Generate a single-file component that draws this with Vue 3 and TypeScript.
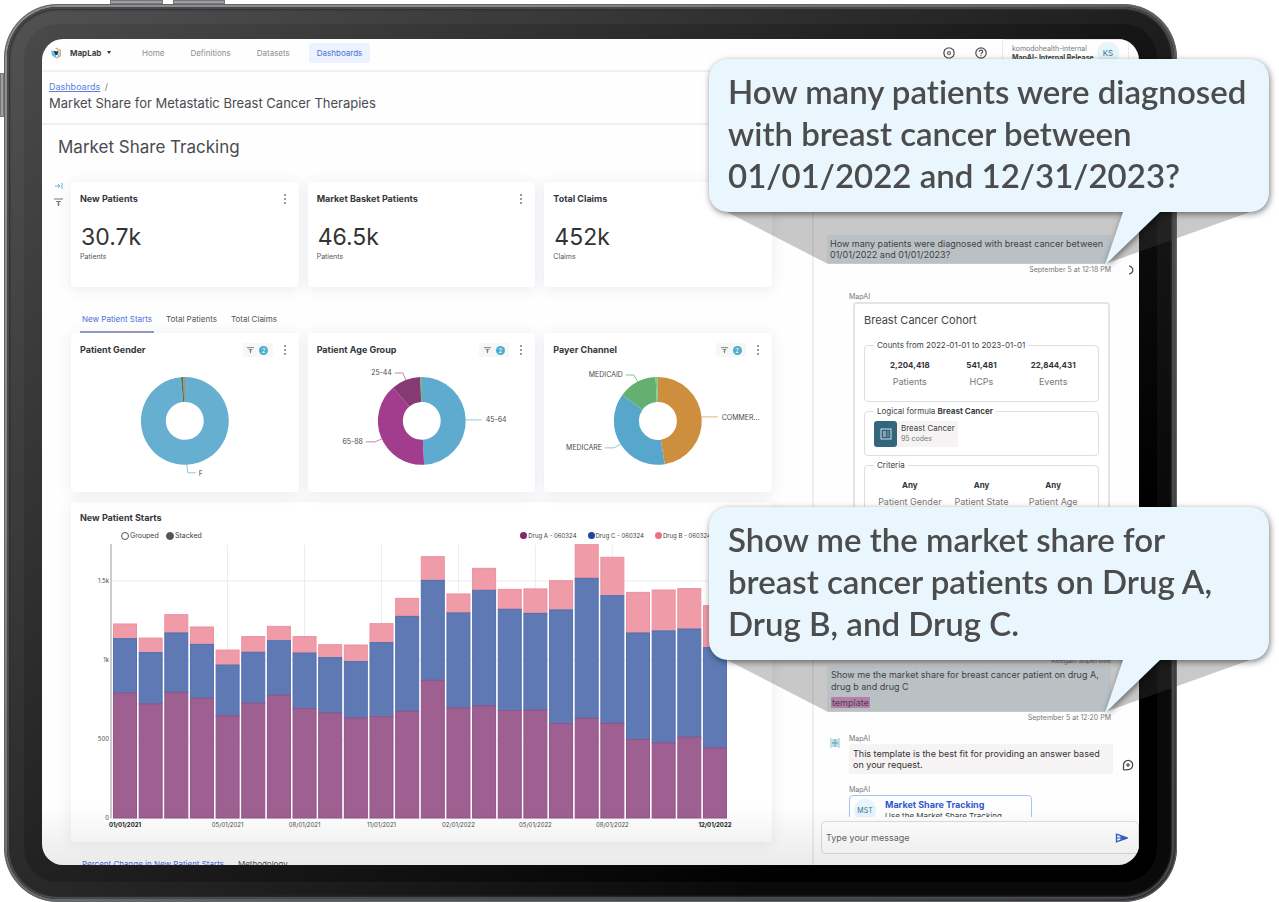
<script setup lang="ts">
import { ref } from 'vue'

interface Slice { color: string; from: number; to: number }
interface DonutLabel { text: string; x: number; y: number; anchor: 'start' | 'end'; line: string; color: string }
interface Donut { title: string; slices: Slice[]; labels: DonutLabel[] }

const navItems = ['Home', 'Definitions', 'Datasets', 'Dashboards']
const metrics = [
  { title: 'New Patients', value: '30.7k', unit: 'Patients' },
  { title: 'Market Basket Patients', value: '46.5k', unit: 'Patients' },
  { title: 'Total Claims', value: '452k', unit: 'Claims' },
]
const tabs = ['New Patient Starts', 'Total Patients', 'Total Claims']

const donuts: Donut[] = [
  {
    title: 'Patient Gender',
    slices: [
      { color: '#67afd0', from: 0, to: 355 },
      { color: '#3f7d4c', from: 355, to: 358 },
      { color: '#a8746c', from: 358, to: 360 },
    ],
    labels: [{ text: 'F', x: 128, y: 120, anchor: 'start', line: '116,109 117,117 125,117', color: '#8cc7e4' }],
  },
  {
    title: 'Patient Age Group',
    slices: [
      { color: '#5fabcf', from: 0, to: 177 },
      { color: '#a23c8c', from: 177, to: 319 },
      { color: '#863a74', from: 319, to: 358 },
      { color: '#63b070', from: 358, to: 360 },
    ],
    labels: [
      { text: '25-44', x: 84, y: 19, anchor: 'end', line: '87,17 95,17 98,24', color: '#c583b6' },
      { text: '65-88', x: 55, y: 88, anchor: 'end', line: '58,86 67,86 74,83', color: '#c583b6' },
      { text: '45-64', x: 178, y: 66, anchor: 'start', line: '158,64 174,64', color: '#8cc7e4' },
    ],
  },
  {
    title: 'Payer Channel',
    slices: [
      { color: '#cd8f3e', from: 0, to: 171 },
      { color: '#57a6cb', from: 171, to: 306 },
      { color: '#63b070', from: 306, to: 357 },
      { color: '#7cc489', from: 357, to: 360 },
    ],
    labels: [
      { text: 'MEDICAID', x: 79, y: 21, anchor: 'end', line: '82,19 90,19 94,26', color: '#7cc489' },
      { text: 'MEDICARE', x: 58, y: 94, anchor: 'end', line: '61,92 70,92 77,88', color: '#8cc7e4' },
      { text: 'COMMER...', x: 178, y: 64, anchor: 'start', line: '158,61 174,61', color: '#dfb27a' },
    ],
  },
]

function polar(radius: number, degrees: number): string {
  const a = (degrees * Math.PI) / 180
  return `${(114 + radius * Math.sin(a)).toFixed(2)} ${(65 - radius * Math.cos(a)).toFixed(2)}`
}
function arc(s: Slice): string {
  const large = s.to - s.from > 180 ? 1 : 0
  return `M${polar(44, s.from)}A44 44 0 ${large} 1 ${polar(44, s.to)}L${polar(19, s.to)}A19 19 0 ${large} 0 ${polar(19, s.from)}Z`
}

/* Running totals per month: drug A, A + C, A + C + B */
const months: [number, number, number][] = [
  [791, 1135, 1228], [722, 1047, 1139], [795, 1171, 1287], [757, 1099, 1209],
  [646, 968, 1063], [726, 1049, 1148], [776, 1122, 1213], [692, 1044, 1148],
  [665, 1015, 1097], [633, 990, 1095], [641, 1110, 1230], [675, 1276, 1390],
  [871, 1504, 1654], [696, 1298, 1418], [709, 1441, 1580], [679, 1321, 1447],
  [682, 1295, 1450], [597, 1317, 1502], [631, 1517, 1730], [599, 1407, 1650],
  [496, 1171, 1428], [475, 1184, 1443], [511, 1196, 1452], [443, 1078, 1344],
]
const step = 25.65
const baseline = 276
const yOf = (v: number): number => baseline - (v * 79) / 500
const bars = months.flatMap(([a, c, b], i) => {
  const x = 42.5 + i * step
  return [
    { x, y: yOf(b), h: yOf(c) - yOf(b), kind: 'b' },
    { x, y: yOf(c), h: yOf(a) - yOf(c), kind: 'c' },
    { x, y: yOf(a), h: baseline - yOf(a), kind: 'a' },
  ]
})
const yTicks = [
  { label: '1.5k', value: 1500 },
  { label: '1k', value: 1000 },
  { label: '500', value: 500 },
  { label: '0', value: 0 },
]
const xTicks = [
  { label: '01/01/2021', i: 0, bold: true },
  { label: '05/01/2021', i: 4, bold: false },
  { label: '08/01/2021', i: 7, bold: false },
  { label: '11/01/2021', i: 10, bold: false },
  { label: '02/01/2022', i: 13, bold: false },
  { label: '05/01/2022', i: 16, bold: false },
  { label: '08/01/2022', i: 19, bold: false },
  { label: '12/01/2022', i: 23, bold: true },
].map((t) => ({ ...t, x: 54 + t.i * step }))
const series = [
  { name: 'Drug A - 060324', kind: 'a' },
  { name: 'Drug C - 060324', kind: 'c' },
  { name: 'Drug B - 060324', kind: 'b' },
]
const mode = ref('Stacked')
const draft = ref('')

const counts = [
  { value: '2,204,418', label: 'Patients' },
  { value: '541,481', label: 'HCPs' },
  { value: '22,844,431', label: 'Events' },
]
const criteria = ['Patient Gender', 'Patient State', 'Patient Age']
const callouts = [
  { place: 'first', lines: ['How many patients were diagnosed', 'with breast cancer between', '01/01/2022 and 12/31/2023?'] },
  { place: 'second', lines: ['Show me the market share for', 'breast cancer patients on Drug A,', 'Drug B, and Drug C.'] },
]
</script>

<template>
  <div class="stage">
    <div class="tablet">
      <i class="key key-top-a"></i><i class="key key-top-b"></i><i class="key key-side"></i>
      <div class="screen">
        <header class="topbar">
          <svg class="logo" viewBox="0 0 12 12">
            <path d="M1 3.200 4 4.600 6 8 6 11 2.200 8.800Z" fill="#5fc3dd" />
            <path d="M3.500 3.500 6.500 4.500 8.500 3.500 7.500 8 5.500 8Z" fill="#20384f" />
            <path d="M5.600 1 10.400 3.400 10.400 8.800 6 11.300" fill="none" stroke="#d9a27f" stroke-width="1.200" />
            <path d="M9 4.500v3.600L7 9.600" fill="none" stroke="#8cb7ce" />
          </svg>
          <button class="brand">MapLab <i class="caret"></i></button>
          <nav class="nav">
            <a v-for="n in navItems" :key="n" href="#" :class="{ active: n === 'Dashboards' }">{{ n }}</a>
          </nav>
          <button class="round" aria-label="Settings">
            <svg viewBox="0 0 12 12"><path d="M4.400 1h3.200l2.800 1.800.8 3.200-.8 3.200L7.600 11H4.400L1.600 9.200.8 6l.8-3.200Z" /><circle class="hub" cx="6" cy="6" r="1.800" /></svg>
          </button>
          <button class="round" aria-label="Help">
            <svg viewBox="0 0 12 12"><circle cx="6" cy="6" r="5.200" /><path d="M4.300 4.800c0-2.400 3.500-2.200 3.400-.1C7.600 5.900 6 5.900 6 7.200M6 8.200v1" /></svg>
          </button>
          <div class="org">
            <div class="org-names"><span>komodohealth-internal</span><b>MapAI- Internal Release</b></div>
            <span class="avatar">KS</span>
          </div>
        </header>

        <div class="crumbs">
          <p><a href="#">Dashboards</a> <span>/</span></p>
          <h1>Market Share for Metastatic Breast Cancer Therapies</h1>
        </div>

        <div class="body">
          <main class="dash">
            <h2>Market Share Tracking</h2>
            <div class="dash-row">
              <aside class="rail">
                <button aria-label="Expand filters">
                  <svg class="expand" viewBox="0 0 8 8"><path d="M0 4h5M3 2l2 2-2 2M7 1v6" /></svg>
                </button>
                <button aria-label="Filter">
                  <svg class="funnel" viewBox="0 0 9 8"><path d="M0 1h9M2 3.500h5M3.500 6h2M4.500 4v4" /></svg>
                </button>
              </aside>
              <div class="content">
                <section class="grid">
                  <article v-for="m in metrics" :key="m.title" class="card metric">
                    <div class="card-head"><h3>{{ m.title }}</h3><button class="kebab" aria-label="More"><i></i><i></i><i></i></button></div>
                    <p class="value">{{ m.value }}</p>
                    <p class="unit">{{ m.unit }}</p>
                  </article>
                </section>

                <div class="tabs">
                  <button v-for="(t, i) in tabs" :key="t" :class="{ active: i === 0 }">{{ t }}</button>
                </div>

                <section class="grid">
                  <article v-for="d in donuts" :key="d.title" class="card donut">
                    <div class="card-head">
                      <h3>{{ d.title }}</h3>
                      <button class="chip" aria-label="Filters">
                        <svg class="funnel" viewBox="0 0 9 8"><path d="M0 1h9M2 3.500h5M3.500 6h2M4.500 4v4" /></svg>
                        <span>2</span>
                      </button>
                      <button class="kebab" aria-label="More"><i></i><i></i><i></i></button>
                    </div>
                    <svg class="plot" viewBox="0 0 228 136">
                      <path v-for="s in d.slices" :key="s.from" :d="arc(s)" :fill="s.color" />
                      <g v-for="l in d.labels" :key="l.text">
                        <polyline :points="l.line" :stroke="l.color" fill="none" />
                        <text :x="l.x" :y="l.y" :text-anchor="l.anchor">{{ l.text }}</text>
                      </g>
                    </svg>
                  </article>
                </section>

                <section class="card chart">
                  <h3>New Patient Starts</h3>
                  <div class="legend">
                    <label v-for="m in ['Grouped', 'Stacked']" :key="m"><input v-model="mode" type="radio" name="mode" :value="m" />{{ m }}</label>
                    <div class="series"><span v-for="s in series" :key="s.name"><i :class="s.kind"></i>{{ s.name }}</span></div>
                  </div>
                  <svg class="plot" viewBox="0 0 701 290">
                    <g class="gridlines">
                      <path v-for="t in yTicks" :key="t.label" :d="`M40 ${yOf(t.value)}H656`" />
                      <path v-for="t in xTicks.slice(1, -1)" :key="t.label" :d="`M${t.x} 3V276`" />
                    </g>
                    <path class="axis" d="M40 2V276" />
                    <rect v-for="(b, i) in bars" :key="i" :class="b.kind" :x="b.x" :y="b.y" width="23" :height="b.h" />
                    <text v-for="t in yTicks" :key="t.label" x="38" :y="yOf(t.value) + 2" text-anchor="end">{{ t.label }}</text>
                    <text v-for="t in xTicks" :key="t.label" :x="t.x" y="285" text-anchor="middle" :class="{ strong: t.bold }">{{ t.label }}</text>
                  </svg>
                </section>

                <div class="tabs lower">
                  <button class="active">Percent Change in New Patient Starts</button>
                  <button class="dark">Methodology</button>
                </div>
              </div>
            </div>
          </main>

          <aside class="chat">
            <div class="log">
              <div class="mine">
                <p class="bubble blue">How many patients were diagnosed with breast cancer between<br />01/01/2022 and 01/01/2023?</p>
                <div class="stamp-row">
                  <small>September 5 at 12:18 PM</small>
                  <svg class="half" viewBox="0 0 5 10"><path d="M0 .8A4.300 4.300 0 0 1 3 7.500L0 9.300" /></svg>
                </div>
              </div>

              <div class="theirs cohort-wrap">
                <small>MapAI</small>
                <article class="cohort">
                  <h4>Breast Cancer Cohort</h4>
                  <fieldset>
                    <legend>Counts from 2022-01-01 to 2023-01-01</legend>
                    <dl class="stats counts"><div v-for="c in counts" :key="c.label"><dt>{{ c.value }}</dt><dd>{{ c.label }}</dd></div></dl>
                  </fieldset>
                  <fieldset>
                    <legend>Logical formula <b>Breast Cancer</b></legend>
                    <div class="codes">
                      <span class="code-icon"><svg viewBox="0 0 12 12"><rect x="1" y="1" width="10" height="10" /><path d="M3 4h3M3 6h3M3 8h3M8 3.500v1M8 5.500v1M8 7.500v1" /></svg></span>
                      <span class="code-text"><span>Breast Cancer</span><small>95 codes</small></span>
                    </div>
                  </fieldset>
                  <fieldset>
                    <legend>Criteria</legend>
                    <dl class="stats"><div v-for="c in criteria" :key="c"><dt>Any</dt><dd>{{ c }}</dd></div></dl>
                  </fieldset>
                </article>
              </div>

              <div class="mine second-ask">
                <small class="who">Keegan Superville</small>
                <p class="bubble blue">Show me the market share for breast cancer patient on drug A,<br />drug b and drug C<br /><mark>template</mark></p>
                <div class="stamp-row"><small>September 5 at 12:20 PM</small></div>
              </div>

              <div class="theirs reply">
                <svg class="bot" viewBox="0 0 12 12">
                  <path d="M2 1v10M4 2v8M8 2v8M10 1v10" stroke="#a5cdbb" />
                  <path d="M1 3h10M1 5h10M1 7h10M1 9h10" stroke="#bcd3ec" />
                  <path d="M6 2v8M3 6h6" stroke="#4b9db6" />
                </svg>
                <div class="reply-main">
                  <small>MapAI</small>
                  <p class="bubble grey">This template is the best fit for providing an answer based<br />on your request.</p>
                </div>
                <button class="add" aria-label="Add comment">
                  <svg viewBox="0 0 12 12"><path d="M1.500 11V6A4.600 4.600 0 1 1 6 10.600L1.500 11M6 4v4M4 6h4" /></svg>
                </button>
              </div>

              <div class="theirs offer">
                <small>MapAI</small>
                <a href="#" class="template-card">
                  <span class="avatar">MST</span>
                  <span class="template-text"><b>Market Share Tracking</b><span>Use the Market Share Tracking</span></span>
                </a>
              </div>
            </div>

            <form class="composer" @submit.prevent>
              <input v-model="draft" type="text" placeholder="Type your message" aria-label="Type your message" />
              <button aria-label="Send">
                <svg viewBox="0 0 13 10"><path d="M1.500 1.200 12 5 1.500 8.800Z" fill="none" stroke="#3b62d0" stroke-width="1.400" /><path d="M1.500 5 7 5M6 3 12 5 6 7Z" fill="#3b62d0" stroke="#3b62d0" /></svg>
              </button>
            </form>
          </aside>
        </div>
      </div>
    </div>

    <div v-for="c in callouts" :key="c.place" class="callout" :class="c.place">
      <svg class="beam" viewBox="0 0 560 54"><path d="M18 0H541L396 52H119Z" /></svg>
      <div class="speech">
        <p><template v-for="(l, i) in c.lines" :key="l"><br v-if="i" />{{ l }}</template></p>
        <svg class="tail" viewBox="0 0 560 54"><path d="M414 0H451L396 53Z" /></svg>
      </div>
    </div>
  </div>
</template>

<style>
html, body { background: #fff; }
</style>

<style scoped>
* { box-sizing: border-box; margin: 0; padding: 0; }
button { border: 0; background: none; font: inherit; color: inherit; cursor: pointer; }
a { color: inherit; text-decoration: none; }
svg { display: block; }
small { font-size: 7px; line-height: 10px; color: #777; }
.stage { position: relative; height: 100vh; min-height: 860px; padding: 4px 102px 0 4px; overflow: hidden; font-family: Inter, "Open Sans", sans-serif; font-size: 8px; line-height: 12px; color: #3d3f44; }
.tablet { position: relative; height: 100%; padding: 32px 35px 34px; border: 3px solid transparent; border-radius: 54px;
  background: linear-gradient(135deg, #4b4b4b 0%, #383838 20%, #161616 55%, #000 80%) padding-box, linear-gradient(135deg, #8b9296 0%, #83898c 25%, #55575a 60%, #333 100%) border-box;
  box-shadow: inset 0 0 0 2px #48494b, inset 0 0 2px 3px #2e2e30, inset 0 0 0 17px rgba(255, 255, 255, .04); }
.tablet::before { content: ""; position: absolute; inset: -3px; border: 1px solid #626467; border-radius: 54px; pointer-events: none; }
.key { position: absolute; background: #a19d9d; border: 1px solid #77767a; }
.key-top-a { top: -7px; left: 103px; width: 53px; height: 4px; }
.key-top-b { top: -7px; left: 166px; width: 52px; height: 4px; }
.key-side { left: -7px; top: 66px; width: 4px; height: 44px; }
.screen { position: relative; display: flex; flex-direction: column; height: 100%; overflow: hidden; border-radius: 21px; background: #fefefe; }
.screen::after { content: ""; position: absolute; inset: auto 0 0; height: 60px; background: linear-gradient(transparent, rgba(0, 0, 0, .08)); pointer-events: none; }

.topbar { display: flex; align-items: center; flex: none; height: 33px; padding: 0 10px 4px 8px; border-bottom: 2px solid #f0f0f1; }
.logo { width: 12px; height: 12px; margin-right: 8px; }
.brand { display: flex; align-items: center; gap: 6px; width: 72px; font-weight: 700; }
.caret { border: 2px solid transparent; border-top: 3px solid #333; border-bottom: 0; }
.nav { display: flex; flex: 1; gap: 26px; align-items: center; color: #8b8d92; }
.nav a.active { margin-left: -7px; padding: 4px 8px; border-radius: 2px; background: #ecf2fe; color: #4a70dc; }
.round { width: 12px; height: 12px; margin-right: 20px; }
.round svg { width: 12px; fill: none; stroke: #4a4a4d; stroke-width: 1.2; }
.round .hub { fill: #b5b5b8; stroke: #77777a; stroke-width: 1; }
.org { display: flex; align-items: center; gap: 4px; align-self: flex-start; width: 127px; height: 28px; margin-left: -5px; padding-left: 9px; border: 1px solid #e9e9ea; border-radius: 3px; font-size: 7px; line-height: 9px; }
.org-names { display: flex; flex-direction: column; width: 81px; white-space: nowrap; color: #777; }
.org-names b { color: #444; }
.avatar { display: grid; place-items: center; flex: none; width: 22px; height: 22px; border-radius: 50%; background: #e6f5fb; color: #3c7492; font-size: 8px; }

.crumbs { flex: none; height: 53px; padding: 9px 7px 0; border-bottom: 2px solid #f0f0f1; font-size: 9px; }
.crumbs a { color: #5b7fe0; text-decoration: underline; }
.crumbs span { margin-left: 2px; color: #777; }
.crumbs h1 { margin-top: 1px; font-size: 13px; line-height: 18px; font-weight: 400; color: #4a4b50; }

.body { display: flex; flex: 1; min-height: 0; }
.dash { flex: 1; min-width: 0; padding: 11px 40px 0 0; }
.dash h2 { margin: 0 0 24px 16px; font-size: 17px; line-height: 22px; font-weight: 400; color: #4a4b50; }
.dash-row { display: flex; }
.rail { display: flex; flex-direction: column; gap: 8px; align-items: center; flex: none; width: 29px; padding-left: 4px; }
.rail button { height: 8px; }
.expand { width: 8px; fill: none; stroke: #62b6d3; }
.funnel { width: 9px; height: 8px; fill: none; stroke: #777; stroke-width: 1.2; }
.content { flex: 1; min-width: 0; }
.grid { display: grid; grid-template-columns: repeat(3, 1fr); gap: 9px; }
.card { border-radius: 4px; background: #fff; box-shadow: 0 2px 14px rgba(60, 70, 130, .1); }
.card-head { display: flex; align-items: center; height: 12px; padding: 0 10px 0 9px; }
.card h3 { font-size: 9px; line-height: 12px; font-weight: 700; color: #35373b; }
.kebab { display: flex; flex-direction: column; gap: 2px; width: 8px; margin-left: auto; padding-left: 3px; }
.kebab i { width: 2px; height: 2px; border-radius: 50%; background: #777b84; }
.metric { height: 105px; padding-top: 11px; }
.value { margin: 18px 10px 0; font-size: 23px; line-height: 28px; color: #333; }
.unit { margin: 1px 10px 0 9px; font-size: 7px; line-height: 10px; color: #555; }
.tabs { display: flex; gap: 10px; margin: 26px 0 0 9px; }
.tabs button { padding: 0 2px 6px; border-bottom: 2px solid transparent; font-size: 8px; line-height: 12px; color: #555; white-space: nowrap; }
.tabs .active { border-color: #979cc4; color: #4b6fe0; }
.tabs.lower { margin-top: 16px; }
.donut { padding-top: 11px; }
.chip { display: flex; align-items: center; justify-content: center; gap: 5px; width: 30px; height: 14px; margin-left: auto; border-radius: 2px; background: #f7f7f8; }
.chip + .kebab { margin-left: 8px; }
.chip .funnel { width: 7px; }
.chip span { display: grid; place-items: center; width: 9px; height: 9px; border-radius: 50%; background: #4fabd0; color: #fff; font-size: 6px; line-height: 9px; }
.plot { width: 100%; }
.plot text { font-size: 7px; fill: #4a4a4a; }
.chart { margin-top: 10px; padding: 10px 0; }
.chart h3 { padding: 0 9px; }
.chart .plot text { font-size: 6px; }
.chart .plot .strong { font-weight: 700; fill: #222; }
.legend { display: flex; align-items: center; height: 12px; margin-top: 6px; padding: 0 61px 0 50px; font-size: 7px; }
.legend label { display: flex; align-items: center; gap: 1px; width: 45px; }
.legend input { appearance: none; width: 8px; height: 8px; border: 1px solid #555; border-radius: 50%; }
.legend input:checked { background: #555; }
.series { display: flex; gap: 11px; margin-left: auto; font-size: 6px; white-space: nowrap; }
.series span { display: flex; align-items: center; gap: 1px; }
.series i { width: 7px; height: 7px; border-radius: 50%; }
.series .a { background: #80286e; }
.series .c { background: #1f45a0; }
.series .b { background: #ef6f82; }
.gridlines path { stroke: #ececec; }
.axis { stroke: #999; }
rect.a { fill: #9e6090; stroke: #95538a; }
rect.b { fill: #f09ba8; stroke: #ee8f9e; }
rect.c { fill: #5e79b4; stroke: #5270b1; }
.plot rect { stroke-width: 1; }

.chat { display: flex; flex-direction: column; flex: none; width: 327px; border-left: 2px solid #eee; }
.log { flex: 1; min-height: 0; padding: 110px 0 0 13px; overflow: hidden; font-size: 9px; line-height: 11px; }
.bubble { padding: 3px; border-radius: 2px; white-space: nowrap; }
.blue { width: 284px; background: #e9f4f8; }
.stamp-row { display: flex; justify-content: flex-end; align-items: center; gap: 18px; width: 284px; margin-top: 2px; }
.half { width: 5px; height: 10px; margin-right: -23px; fill: none; stroke: #444; stroke-width: 1.2; }
.theirs { margin-left: 22px; }
.theirs > small { display: block; }
.cohort-wrap { margin-top: 17px; }
.cohort { height: 342px; width: 257px; margin: 0 0 0 4px; padding: 8px 9px; border: 2px solid #e4e4e5; border-radius: 4px; background: #fff; }
.cohort h4 { margin-bottom: 12px; font-size: 11px; line-height: 16px; font-weight: 400; color: #444; }
fieldset { margin-bottom: 4px; padding: 0 9px; border: 1px solid #dedede; border-radius: 4px; min-width: 0; }
legend { padding: 0 3px; font-size: 8px; line-height: 10px; }
.stats { display: grid; grid-template-columns: repeat(3, 1fr); margin: 10px 0 14px; text-align: center; line-height: 11px; }
.stats dt { font-size: 8px; font-weight: 700; color: #333; }
.stats dd { margin-top: 5px; font-size: 9px; color: #777; white-space: nowrap; }
.codes { display: flex; margin: 5px 0 8px; }
.code-icon { display: grid; place-items: center; width: 23px; height: 26px; border-radius: 3px; background: #33657b; }
.code-icon svg { width: 12px; fill: none; stroke: #cfe2ea; }
.code-text { display: flex; flex-direction: column; width: 61px; padding: 2px 4px; border-radius: 2px; background: #f6f3f4; font-size: 8px; line-height: 11px; white-space: nowrap; }
.second-ask { margin-top: 12px; }
.who { display: block; width: 284px; text-align: right; }
.second-ask .blue { padding: 3px 3px 2px 4px; line-height: 12px; }
mark { display: inline-block; margin-top: 4px; padding: 0 1px; border-radius: 1px; background: #e696d6; color: #444; line-height: 11px; }
.reply { display: flex; align-items: flex-start; margin: 11px 0; }
.theirs.reply { margin-left: 0; }
.bot { width: 12px; height: 12px; margin: 3px 8px 0 2px; }
.reply-main small { display: block; }
.grey { width: 264px; padding: 4px; background: #f6f3f4; color: #333; }
.add { width: 12px; margin: 25px 0 0 9px; }
.add svg { width: 12px; fill: none; stroke: #444; stroke-width: 1.2; }
.template-card { display: flex; gap: 9px; width: 183px; padding: 3px 4px 12px; border: 1px solid #a9c3f3; border-radius: 4px; }
.template-card .avatar { font-size: 7px; }
.template-text { display: flex; flex-direction: column; font-size: 8px; line-height: 11px; white-space: nowrap; }
.template-text b { font-size: 9px; line-height: 12px; color: #2f58cf; }
.composer { display: flex; align-items: center; flex: none; height: 33px; margin: 4px 0 11px 7px; padding: 0 10px 0 4px; border: 1px solid #dedede; border-radius: 4px; background: #fff; }
.composer input { flex: 1; min-width: 0; border: 0; outline: 0; background: none; font: inherit; font-size: 9px; }
.composer input::placeholder { color: #666; opacity: 1; }
.composer svg { width: 13px; height: 10px; }

.callout { position: absolute; right: 10px; width: 560px; isolation: isolate; }
.first { top: 59px; }
.second { top: 507px; }
.speech { position: relative; filter: drop-shadow(1px 2px 3px rgba(0, 0, 0, .5)); }
.speech p { padding: 11px 19px 16px; border-radius: 19px; background: #e9f6fd; font-family: Lato, "Open Sans", sans-serif; font-size: 33px; line-height: 42px; font-weight: 600; font-variant-ligatures: none; color: #4c4c4c; white-space: nowrap; }
.tail, .beam { position: absolute; top: 100%; left: 0; width: 100%; }
.tail path { fill: #e9f6fd; }
.beam { z-index: -1; }
.beam path { fill: rgba(70, 70, 70, .29); }
</style>
